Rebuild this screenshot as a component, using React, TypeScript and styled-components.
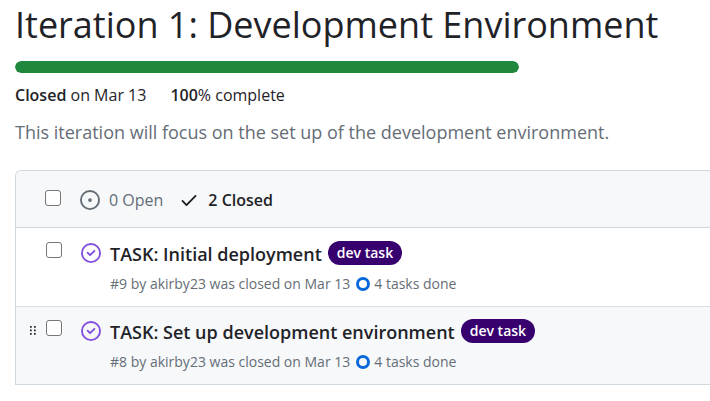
import React from "react";
import styled, { createGlobalStyle } from "styled-components";

const GlobalStyle = createGlobalStyle`
  * { box-sizing: border-box; }
  body {
    margin: 0;
    background: #ffffff;
    color: #1f2328;
    font-family: "Open Sans", "Segoe UI", sans-serif;
    overflow-x: hidden;
  }
`;

const Page = styled.main`
  padding: 0 0 16px 15px;
`;

const Title = styled.h1`
  margin: 0;
  font-size: 36px;
  line-height: 50px;
  font-weight: 400;
  white-space: nowrap;
`;

const Progress = styled.div`
  width: 504px;
  max-width: 100%;
  height: 12px;
  margin-top: 11px;
  border-radius: 6px;
  background: #eff1f3;
  overflow: hidden;
`;

const ProgressFill = styled.div`
  height: 100%;
  border-radius: 6px;
  background: #1f883d;
`;

const Summary = styled.div`
  display: flex;
  gap: 24px;
  margin-top: 10px;
  font-size: 16px;
  line-height: 24px;
  white-space: nowrap;

  strong { font-weight: 600; }
`;

const Description = styled.p`
  margin: 12px 0 0;
  color: #656d76;
  font-size: 18px;
  line-height: 26px;
  white-space: nowrap;
`;

const IssueBox = styled.section`
  margin-top: 25px;
  border: 1px solid #d0d7de;
  border-right: 0;
  border-radius: 6px 0 0 0;
  overflow: hidden;
`;

const BoxHeader = styled.header`
  display: flex;
  align-items: center;
  height: 57px;
  padding: 2px 16px 0 29px;
  border-bottom: 1px solid #d0d7de;
  background: #f6f8fa;
`;

const Checkbox = styled.input`
  appearance: none;
  flex: none;
  width: 16px;
  height: 16px;
  margin: 0;
  border: 1px solid #767676;
  border-radius: 3px;
  background: #ffffff;

  &:checked { background: #0969da; border-color: #0969da; }
`;

const HeaderCheckbox = styled(Checkbox)`
  margin: 0 19px 4px 0;
`;

const StateLink = styled.a<{ $selected?: boolean }>`
  display: flex;
  align-items: center;
  gap: 9px;
  margin-right: 16px;
  color: ${(p) => (p.$selected ? "#1f2328" : "#656d76")};
  font-size: 16px;
  font-weight: ${(p) => (p.$selected ? 600 : 400)};
  line-height: 24px;
  text-decoration: none;
  white-space: nowrap;
`;

const Icon = styled.svg`
  display: block;
  flex: none;
  fill: currentColor;
`;

const List = styled.ul`
  margin: 0;
  padding: 0;
  list-style: none;
`;

const Row = styled.li<{ $active?: boolean }>`
  display: flex;
  align-items: flex-start;
  height: 78px;
  padding-top: 14px;
  background: ${(p) => (p.$active ? "#f6f8fa" : "#ffffff")};

  & + & { border-top: 1px solid #d8dee4; padding-top: 13px; }
`;

const DragHandle = styled.button<{ $visible?: boolean }>`
  display: flex;
  justify-content: flex-end;
  flex: none;
  width: 30px;
  height: 20px;
  padding: 6px 10px 0 0;
  border: 0;
  background: none;
  color: #1f2328;
  visibility: ${(p) => (p.$visible ? "visible" : "hidden")};
`;

const ClosedIcon = styled(Icon)`
  margin: 1px 9px 0 19px;
  color: #8250df;
`;

const Content = styled.div`
  min-width: 0;
`;

const TitleLine = styled.div`
  display: flex;
  align-items: flex-start;
  gap: 6px;
  height: 24px;
`;

const TaskTitle = styled.a`
  color: #1f2328;
  font-size: 18px;
  font-weight: 600;
  line-height: 24px;
  text-decoration: none;
  white-space: nowrap;
`;

const Label = styled.a`
  margin-top: -1px;
  padding: 0 9px;
  border-radius: 12px;
  background: #37006e;
  color: #ffffff;
  font-size: 14px;
  font-weight: 600;
  line-height: 24px;
  text-decoration: none;
  white-space: nowrap;
`;

const Meta = styled.div`
  display: flex;
  align-items: center;
  margin-top: 8px;
  color: #656d76;
  font-size: 14px;
  line-height: 20px;
  white-space: nowrap;
`;

const TaskRing = styled(Icon)`
  margin: 0 4px 0 6px;
  color: #0969da;
`;

const tasks = [
  { number: 9, title: "TASK: Initial deployment", active: false },
  { number: 8, title: "TASK: Set up development environment", active: true },
];

const progress = 100;

export default function App() {
  return (
    <Page>
      <GlobalStyle />
      <Title>Iteration 1: Development Environment</Title>
      <Progress role="progressbar" aria-label="Iteration progress" aria-valuenow={progress}>
        <ProgressFill style={{ width: `${progress}%` }} />
      </Progress>
      <Summary>
        <span><strong>Closed</strong> on Mar 13</span>
        <span><strong>100</strong>% complete</span>
      </Summary>
      <Description>This iteration will focus on the set up of the development environment.</Description>
      <IssueBox>
        <BoxHeader>
          <HeaderCheckbox type="checkbox" aria-label="Select all issues" />
          <StateLink href="#open">
            <Icon width="20" height="20" viewBox="0 0 16 16" aria-hidden="true">
              <path d="M8 9.5a1.5 1.5 0 1 0 0-3 1.5 1.5 0 0 0 0 3Z" />
              <path d="M8 0a8 8 0 1 1 0 16A8 8 0 0 1 8 0ZM1.5 8a6.5 6.5 0 1 0 13 0 6.5 6.5 0 0 0-13 0Z" />
            </Icon>
            0 Open
          </StateLink>
          <StateLink href="#closed" $selected>
            <Icon width="20" height="20" viewBox="0 0 16 16" aria-hidden="true">
              <path d="M13.78 4.22a.75.75 0 0 1 0 1.06l-7.25 7.25a.75.75 0 0 1-1.06 0L2.22 9.28a.751.751 0 0 1 .018-1.042.751.751 0 0 1 1.042-.018L6 10.94l6.72-6.72a.75.75 0 0 1 1.06 0Z" />
            </Icon>
            2 Closed
          </StateLink>
        </BoxHeader>
        <List>
          {tasks.map((task) => (
            <Row key={task.number} $active={task.active}>
              <DragHandle type="button" aria-label="Move issue" $visible={task.active}>
                <Icon width="6" height="10" viewBox="0 0 6 10" aria-hidden="true">
                  <path d="M0 0h1.7v1.7H0zM4 0h1.7v1.7H4zM0 3.5h1.7v1.7H0zM4 3.5h1.7v1.7H4zM0 7h1.7v1.7H0zM4 7h1.7v1.7H4z" />
                </Icon>
              </DragHandle>
              <Checkbox type="checkbox" aria-label={`Select ${task.title}`} />
              <ClosedIcon width="20" height="20" viewBox="0 0 16 16" aria-hidden="true">
                <path d="M11.28 6.78a.75.75 0 0 0-1.06-1.06L7.25 8.69 5.78 7.22a.75.75 0 0 0-1.06 1.06l2 2a.75.75 0 0 0 1.06 0l3.5-3.5Z" />
                <path d="M16 8A8 8 0 1 1 0 8a8 8 0 0 1 16 0Zm-1.5 0a6.5 6.5 0 1 0-13 0 6.5 6.5 0 0 0 13 0Z" />
              </ClosedIcon>
              <Content>
                <TitleLine>
                  <TaskTitle href={`#issue-${task.number}`}>{task.title}</TaskTitle>
                  <Label href="#dev-task">dev task</Label>
                </TitleLine>
                <Meta>
                  <span>#{task.number} by akirby23 was closed on Mar 13</span>
                  <TaskRing width="14" height="14" viewBox="0 0 14 14" aria-hidden="true">
                    <path d="M7 0a7 7 0 1 1 0 14A7 7 0 0 1 7 0Zm0 3a4 4 0 1 0 0 8 4 4 0 0 0 0-8Z" />
                  </TaskRing>
                  <span>4 tasks done</span>
                </Meta>
              </Content>
            </Row>
          ))}
        </List>
      </IssueBox>
    </Page>
  );
}
